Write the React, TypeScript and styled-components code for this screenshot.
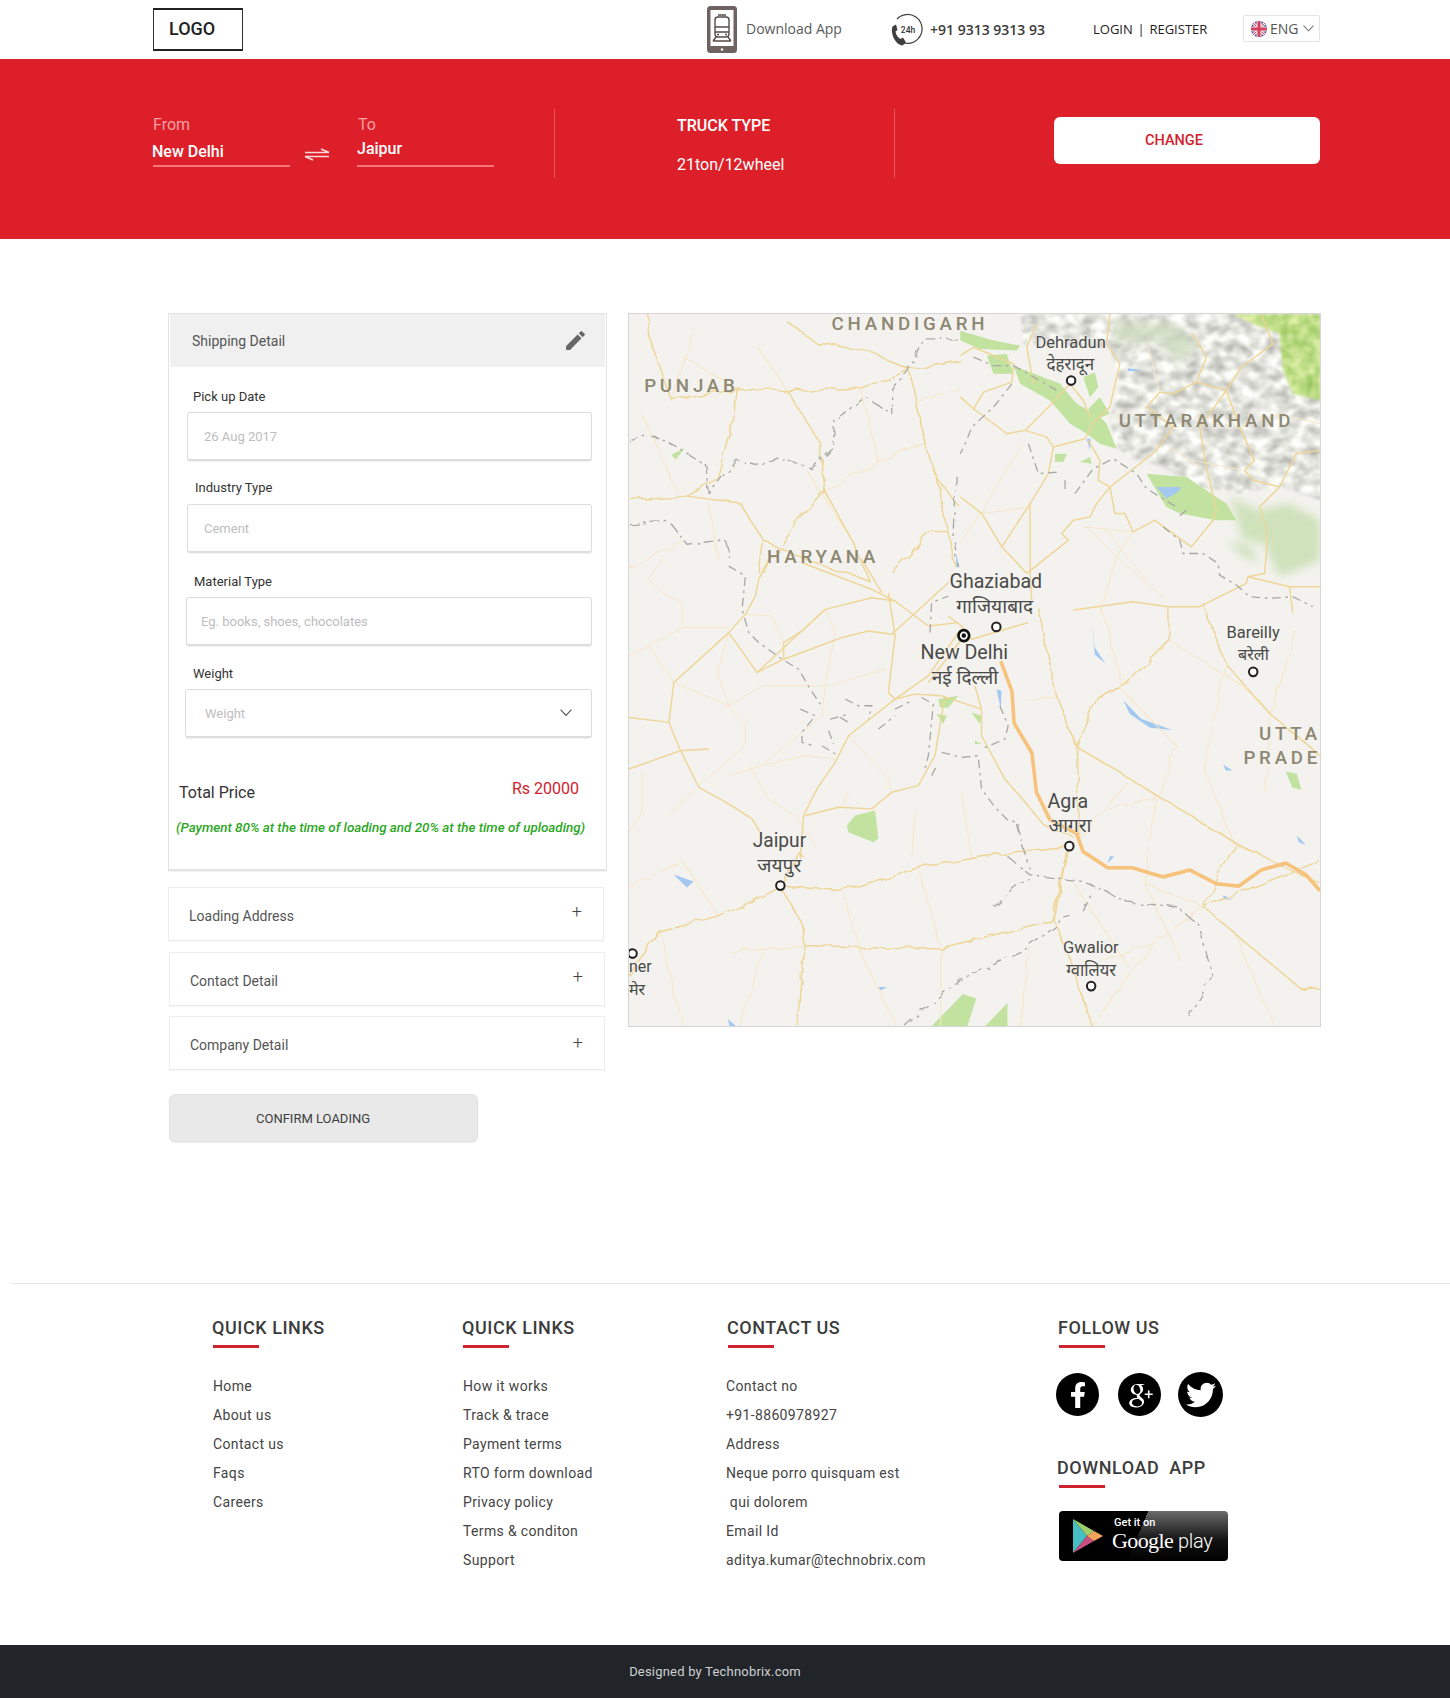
import React from "react";
import styled, { createGlobalStyle } from "styled-components";
import { FaFacebookF, FaTwitter } from "react-icons/fa";
import { MdEdit } from "react-icons/md";
import { TiSocialGooglePlus } from "react-icons/ti";

const Global = createGlobalStyle`
  html, body { margin: 0; padding: 0; background: #fff; }
  body { font-family: Roboto, "Liberation Sans", sans-serif; color: #333; }
  * { box-sizing: border-box; }
`;

const Page = styled.div`width: 1450px; height: 1698px; overflow: hidden; display: flex; flex-direction: column;`;

const Header = styled.header`
  height: 59px; padding-left: 153px; display: grid; align-items: center;
  grid-template-columns: 554px 183px 203px 150px 77px;
`;
const Logo = styled.div`
  width: 90px; height: 43px; border: 1px solid #333; border-top: 2px solid #222; border-bottom: 2px solid #222;
  display: flex; align-items: center; padding: 0 0 2px 15px; font-size: 18px; font-weight: 500; color: #222;
`;
const HeaderItem = styled.div`display: flex; align-items: center;`;
const DownloadText = styled.span`margin-left: 9px; font: 400 14px "Open Sans", sans-serif; color: #5a5a5a; position: relative; top: -1px;`;
const PhoneNumber = styled.span`margin-left: 7px; font: 600 14px "Open Sans", sans-serif; color: #3a3a3a;`;
const AuthLinks = styled.div`font: 400 13px "Open Sans", sans-serif; color: #222; white-space: pre; word-spacing: -1px; position: relative; top: -1px;`;
const LangBox = styled.div`
  height: 27px; width: 77px; border: 1px solid #e4e4e4; border-radius: 2px; display: flex; align-items: center;
  padding-left: 7px; gap: 3px; font: 400 14px "Open Sans", sans-serif; color: #555; position: relative; top: -1px;
`;
const LangChevron = styled.span`display: flex; margin-left: 1px;`;

const Band = styled.section`
  height: 180px; background: #dd1f2a; padding: 50px 0 0 153px; display: grid; grid-template-columns: 401px 341px 266px;
  align-items: start;
`;
const Route = styled.div`display: flex; align-items: flex-start;`;
const RouteField = styled.div`width: 137px; height: 58px; border-bottom: 2px solid #f4777d;`;
const RouteLabel = styled.div<{ $x?: number }>`
  font-size: 16px; line-height: 20px; color: #f7a0a5; margin-top: 6px; padding-left: ${p => p.$x ?? 0}px;
`;
const RouteValue = styled.div<{ $top: number; $x: number }>`
  font-size: 16px; font-weight: 500; line-height: 20px; color: #fff; margin-top: ${p => p.$top}px; margin-left: ${p => p.$x}px;
`;
const SwapIcon = styled.svg`width: 26px; height: 18px; margin: 35px 27px 0 14px; flex: none;`;
const Truck = styled.div`height: 69px; border-left: 1px solid #e9565e; border-right: 1px solid #e9565e; padding: 7px 0 0 122px; color: #fff;`;
const TruckTitle = styled.div`font-size: 16px; font-weight: 500; line-height: 20px;`;
const TruckValue = styled.div`font-size: 16px; line-height: 20px; margin-top: 19px;`;
const ChangeWrap = styled.div`padding-left: 159px; width: 425px;`;
const ChangeButton = styled.div`
  width: 266px; height: 47px; margin-top: 8px; background: #fff; border-radius: 6px; display: flex; align-items: center;
  padding-left: 91px; font-size: 14.5px; font-weight: 500; color: #d3202c;
`;

const Main = styled.main`height: 1044px; padding: 74px 0 0 168px; display: flex; gap: 21px; align-items: flex-start;`;
const LeftColumn = styled.div`width: 439px;`;
const Panel = styled.div`
  height: 558px; border: 1px solid #e3e3e3; border-bottom-width: 2px; padding: 0 1px; box-shadow: 0 1px 0 #f3f3f3;
`;
const PanelHead = styled.div`
  height: 53px; background: #f0f0f0; display: flex; align-items: center; justify-content: space-between;
  padding: 0 17px 0 22px; font-size: 14px; font-weight: 400; color: #555;
`;
const FieldLabel = styled.div<{ $top: number; $x: number }>`
  font-size: 13px; font-weight: 400; line-height: 16px; color: #333; margin-top: ${p => p.$top}px; margin-left: ${p => p.$x}px;
`;
const FieldBox = styled.div<{ $top: number; $x: number; $pad: number }>`
  height: 49px; margin: ${p => p.$top}px 13px 0 ${p => p.$x}px; border: 1px solid #ddd; border-bottom-width: 2px;
  border-radius: 3px; display: flex; align-items: center; justify-content: space-between; box-shadow: 0 1px 0 #f3f3f3;
  padding: 0 19px 0 ${p => p.$pad}px; font-size: 13px; color: #bdbdbd;
`;
const TotalRow = styled.div`
  margin: 43px 26px 0 9px; height: 24px; display: flex; justify-content: space-between; align-items: flex-start;
`;
const TotalLabel = styled.span`font-size: 16px; line-height: 20px; color: #333; margin-top: 2px;`;
const TotalValue = styled.span`font-size: 16px; line-height: 20px; color: #d3202c; margin-top: -2px;`;
const PaymentNote = styled.div`
  margin: 15px 0 0 6px; font-size: 13.4px; font-weight: 500; font-style: italic; line-height: 16px; color: #2aa71e; white-space: nowrap;
`;
const Accordion = styled.div<{ $top: number; $x?: number }>`
  width: 436px; height: 54px; margin-top: ${p => p.$top}px; margin-left: ${p => p.$x ?? 0}px; border: 1px solid #ececec;
  display: flex; align-items: center; justify-content: space-between; padding: 0 21px 0 20px; box-shadow: 0 1px 0 #f6f6f6;
  font-size: 14px; font-weight: 400; color: #555;
`;
const AccordionLabel = styled.span`position: relative; top: 2px;`;
const Plus = styled.span<{ $up?: number }>`font-size: 18px; font-weight: 300; color: #444; position: relative; top: ${p => -(p.$up ?? 3)}px;`;
const Confirm = styled.div`
  width: 309px; height: 48px; margin: 24px 0 0 1px; background: #e9e9e9; border: 1px solid #e2e2e2; border-radius: 6px; box-shadow: 0 1px 0 #f0f0f0;
  display: flex; align-items: center; padding-left: 86px; font-size: 13px; font-weight: 400; color: #3d3d3d;
`;
const MapFrame = styled.div`width: 693px; height: 714px; border: 1px solid #d5d5d5; flex: none; background: #f3f2ee;`;
const MapSvg = styled.svg`display: block; width: 691px; height: 712px;`;

const Footer = styled.footer`
  margin-left: 11px; height: 362px; border-top: 1px solid #e6e6e6; padding: 33px 0 0 201px;
  display: grid; grid-template-columns: 250px 265px 331px auto; align-items: start;
`;
const FootCol = styled.div``;
const FootHead = styled.div<{ $top?: number; $x?: number }>`
  font-size: 18px; font-weight: 500; line-height: 22px; letter-spacing: .55px; color: #3c3c3c; white-space: pre;
  margin-top: ${p => p.$top ?? 0}px; margin-left: ${p => p.$x ?? 0}px;
`;
const RedRule = styled.div`width: 46px; height: 3px; background: #cf222e; margin: 6px 0 0 1px;`;
const FootList = styled.ul<{ $x?: number }>`list-style: none; margin: 24px 0 0 ${p => p.$x ?? 1}px; padding: 0;`;
const FootItem = styled.li`font-size: 14px; line-height: 29px; letter-spacing: .35px; color: #444; white-space: pre;`;
const Socials = styled.div`display: flex; margin: 24px 0 0 -2px; align-items: center;`;
const Social = styled.div<{ $gap: number; $size: number }>`
  width: ${p => p.$size}px; height: ${p => p.$size}px; border-radius: 50%; background: #000; color: #fff; margin-left: ${p => p.$gap}px;
  display: flex; align-items: center; justify-content: center;
`;
const PlayBadge = styled.div`
  width: 169px; height: 50px; margin: 23px 0 0 1px; border-radius: 4px; overflow: hidden; color: #fff; display: flex;
  background: linear-gradient(113deg, #000 0 47%, transparent 47%), linear-gradient(180deg, #6a6a6a, #111 60%, #000);
`;
const PlayIcon = styled.svg`width: 32px; height: 36px; margin: 7px 0 0 13px; flex: none;`;
const PlayText = styled.div`margin-left: 8px; padding-top: 5px;`;
const PlaySmall = styled.div`font-size: 11px; font-weight: 500; line-height: 13px; margin-left: 2px;`;
const PlayBig = styled.div`font: 400 22px/24px "Liberation Serif", serif; letter-spacing: -.6px; white-space: nowrap;`;
const PlayWord = styled.span`font: 300 20px/24px Roboto, sans-serif; letter-spacing: -.3px;`;

const BottomBar = styled.div`
  height: 53px; background: #212529; color: #cfd0d1; font-size: 13px; display: flex; align-items: center; justify-content: center;
  padding-right: 20px; letter-spacing: .2px;
`;

/* Roads outside the two traced zones, in the map's own units */
const majorRoads = [
  "M630 130 L645 200 L665 290 L690 365 L715 480 L735 560", "M630 130 L744 110",
  "M630 130 L540 90 L420 70 L350 20", "M630 130 L520 170 L355 175 L240 170 L95 195 L50 80 L40 8",
  "M355 175 L430 290 L440 395 L500 500 L540 590", "M240 170 L235 240 L200 370 L130 405 L0 410",
  "M130 405 L250 420 L300 500 L290 570", "M540 590 L400 545 L300 500", "M440 395 L380 460 L300 570",
  "M715 480 L680 480 L590 570", "M690 365 L744 430",
  "M390 1190 L380 1180 L340 1255", "M340 1255 L200 1320 L70 1355 L20 1420 L0 1450",
  "M340 1255 L480 1265 L650 1215 L800 1190 L990 1170", "M340 1255 L390 1340 L395 1385 L380 1560",
  "M395 1385 L700 1390 L950 1330 L985 1170", "M985 1170 L955 1330 L1000 1440 L1040 1560",
  "M896 1080 L930 1120 L1000 1150", "M920 650 L960 840 L1005 950 L1010 1150",
  "M1005 950 L1190 1060 L1360 1160 L1552 1250", "M1215 650 L1215 720 L1105 825 L1050 840 L1005 950",
  "M1290 640 L1340 770 L1440 880 L1552 970", "M1290 1300 L1510 1480 L1552 1480", "M1290 1300 L1360 1165", "M1290 1300 L1552 1200",
];
const minorRoads = [
  "M30 230 L110 400", "M500 500 L400 350", "M355 175 L290 80", "M150 40 L95 195", "M440 395 L560 330 L665 290", "M645 200 L744 170",
  "M120 100 L240 170", "M0 560 L130 500", "M180 420 L200 540", "M520 170 L560 330", "M0 1260 L120 1200 L200 1320", "M70 1355 L120 1560", "M230 1400 L395 1385",
  "M480 1265 L520 1400 L600 1560", "M650 1215 L700 1390 L700 1560", "M300 1400 L250 1560", "M900 1390 L880 1560",
  "M960 840 L900 850", "M1060 640 L1110 825", "M1215 720 L1380 820 L1440 880", "M1105 825 L1230 950 L1190 1060",
  "M1340 770 L1290 1000 L1360 1160", "M1080 1090 L1180 1060 L1160 1250 L1290 1300", "M1010 1150 L1120 1030",
  "M1000 1440 L1180 1380 L1290 1300", "M1040 1560 L1180 1380", "M1360 1360 L1450 1560", "M1440 880 L1430 1050", "M1500 700 L1440 880",
  "M1000 1250 L1120 1430", "M1160 1250 L1240 1420",
];
const dashedRoads = [
  "M0 285 L50 270 L110 300 L175 340 L180 400 L240 325 L300 340 L330 320 L410 345 L460 300 L460 240 L530 190 L590 225 L590 170 L630 130 L660 60 L740 60",
  "M0 465 L90 460 L130 510 L215 500 L225 543", "M735 360 L730 500 L740 560",
  "M870 1120 L900 1220", "M850 1190 L900 1230 L1020 1245 L1120 1290 L1230 1300 L1280 1340 L1310 1450 L1260 1540",
  "M820 1300 L900 1240", "M1020 1310 L1040 1270", "M620 1560 L740 1460 L880 1400 L990 1320",
];
const route = "M835 765 L860 830 L865 900 L905 965 L915 1050 L945 1110 L1005 1140 L1020 1180 L1075 1215 L1130 1215 L1200 1235 L1260 1220 L1320 1250 L1370 1255 L1420 1220 L1475 1205 L1520 1230 L1552 1265";
const water = [
  "M1040 680 L1046 750 L1070 770 L1046 735 Z", "M1110 850 L1150 890 L1220 915 L1170 910 L1125 880 Z",
  "M100 1230 L145 1245 L130 1258 Z", "M1335 990 L1355 1003 L1340 1003 Z", "M1500 1145 L1520 1165 L1505 1160 Z", "M1335 1275 L1355 1285 L1335 1283 Z",
  "M1080 1190 L1090 1190 L1075 1205 Z", "M560 1475 L580 1475 L565 1482 Z", "M222 1545 L240 1560 L226 1560 Z", "M735 530 L742 560 L735 560 Z",
];
const greens = [
  "M680 1560 L750 1490 L780 1500 L760 1560 Z", "M800 1560 L850 1510 L850 1560 Z", "M95 315 L125 300 L105 325 Z", "M1475 1005 L1500 1010 L1510 1045 L1490 1040 Z",
];

/* North-east zone, traced at 3x from x 960, y 314 */
const zoneARoads = [
  "M0 250 L40 285 L70 235 L155 205 L160 150 L40 100 L0 125",
  "M40 285 L140 360 L195 350 L275 270 L330 210",
  "M195 350 L260 370 L280 400 L375 375 L405 320 L450 280 L470 190 L480 150 L440 90 L450 0",
  "M280 400 L265 480 L210 570 L210 780 L215 860", "M210 570 L125 700 L200 780 M0 550 L65 600 L125 700",
  "M200 780 L325 680 L305 660 L340 620 L390 610 L410 570 L450 520 L585 415 L640 340 L560 280 L600 235 L640 240 L710 205 L740 130 L700 60",
  "M385 380 L420 440 L415 500 L450 520 L465 600 L495 600 L520 655 L585 620 L695 700 L760 620 L770 590 L740 460 L720 340 L800 230 L710 205",
  "M800 230 L845 160 L940 90 L905 0", "M800 230 L840 340 L885 440 L855 470 L880 500 L960 520 L1010 420 L1083 410",
  "M960 520 L900 580 L925 660 L915 780 L865 790 L860 810 L720 880 L625 880 L520 865 L340 890",
  "M865 790 L990 820 L1000 900 M990 820 L1083 820", "M220 210 L200 100 L230 30 M330 210 L370 260 L390 310",
];
const zoneAMinor = [
  "M370 640 L520 655 L470 730 L420 900", "M470 730 L620 860", "M190 390 L100 530 L65 600 L210 580", "M630 400 L720 460", "M380 640 L470 730", "M430 640 L560 800",
  "M0 690 L60 600", "M840 340 L960 300 L1083 330", "M600 235 L560 80", "M850 470 L700 440",
];
const zoneADashed = [
  "M40 130 L100 155 L160 155 L300 235", "M155 210 L100 280 L35 340 L15 390 L0 420", "M205 390 L235 480 L300 475", "M315 500 L315 540",
  "M345 540 L400 465 L460 435 L530 480 L560 525 L650 580", "M680 590 L650 615",
  "M610 640 L660 680 L670 720 L730 720 L775 750 L780 785 L830 815 L870 850 L930 855 L1000 850 L1060 880",
];
const zoneAGreens = [
  "M80 125 L140 120 L160 180 L100 180 Z", "M160 155 L300 210 L350 270 L420 310 L440 330 L470 405 L420 390 L380 360 L330 330 L270 260 L180 210 Z",
  "M385 285 L420 250 L450 300 L400 320 Z", "M370 190 L405 175 L415 220 L390 250 Z", "M560 480 L680 490 L770 550 L800 570 L830 620 L770 620 L660 600 L620 580 Z",
  "M285 420 L320 420 L310 445 L285 445 Z", "M360 445 L390 430 L395 450 Z", "M0 50 L100 80 L180 95 L170 110 L60 105 L0 80 Z",
];
/* South-west zone, traced at 3x from x 628, y 560 */
const zoneBRoads = [
  "M300 220 L350 165 L380 110 L390 60 L420 0", "M300 220 L135 370 L120 490 L155 575 L210 685 L300 735 L370 780 L400 830",
  "M300 220 L385 340 L465 300 L640 235 L720 215 L790 225 L960 70", "M385 340 L590 150 L730 115 L800 125 L900 200 L990 190",
  "M465 300 L465 250 L520 215 L590 150", "M520 10 L730 90 L800 125", "M700 0 L760 100", "M780 100 L800 230 L780 400 L800 420 L860 405 L940 410 L1060 450",
  "M800 420 L660 530 L620 610 L565 690 L525 770 L515 900", "M800 420 L900 350 L990 220", "M950 410 L920 590 L870 680 L790 700 L730 750 L630 745 L530 770",
  "M0 475 L120 490", "M0 630 L155 575 L240 570", "M1040 380 L1060 450 L1060 530 L1130 660 L1200 740", "M960 170 L1000 200 L1030 240 L1200 190", "M1000 240 L900 370",
];
const zoneBMinor = [
  "M135 370 L300 440 L400 380 L600 380 L770 330", "M300 440 L350 500 L350 560 L210 680", "M590 150 L620 220 L590 380 L580 470 L400 620 L300 650",
  "M60 260 L160 205 L300 205", "M60 260 L135 370", "M100 100 L160 130 L160 205", "M350 165 L430 170 L465 250", "M400 620 L530 590 L620 600",
  "M660 530 L780 660 L790 700", "M500 770 L560 860", "M200 690 L120 770", "M40 640 L40 760 L0 820", "M860 760 L850 900", "M1000 700 L1030 900",
  "M300 220 L265 340 L300 440", "M360 620 L420 720 L500 770", "M660 700 L640 745", "M100 0 L60 60 L100 100", "M0 290 L60 260",
];
const zoneBDashed = [
  "M300 20 L350 50 L340 150 L360 220 L390 250 L460 300 L510 330 L545 390 L575 435", "M515 450 L560 470 L520 520 L520 550 L555 560", "M580 560 L620 585", "M600 515 L615 555",
  "M605 480 L660 465", "M650 420 L690 440 L730 440 L720 480", "M635 475 L660 490", "M750 510 L800 470", "M800 450 L850 425", "M880 415 L915 435 L900 590 L890 630", "M910 650 L925 620",
  "M940 580 L1000 595 L1050 590 L1060 690 L1100 745 L1140 785 L1170 790 L1170 820", "M905 220 L910 130 L960 110", "M1115 440 L1140 500 L1130 540 L1060 570",
];
const zoneBGreens = [
  "M655 800 L680 770 L740 755 L750 840 L735 850 L660 820 Z", "M930 420 L990 410 L960 445 L935 445 Z", "M1030 460 L1060 470 L1055 495 Z", "M925 465 L955 470 L945 495 Z", "M1040 545 L1060 555 L1040 555 Z",
];

const stateLabels: [string, number, number][] = [
  ["CHANDIGARH", 455, 43], ["PUNJAB", 34, 177], ["HARYANA", 310, 550], ["UTTARAKHAND", 1100, 254], ["UTTA", 1415, 936], ["PRADE", 1380, 990],
];
const cityLabels: [string, number, number, number][] = [
  ["Ghaziabad", 720, 605, 44], ["गाजियाबाद", 735, 660, 43], ["New Delhi", 655, 760, 44], ["नई दिल्ली", 680, 815, 43],
  ["Agra", 940, 1085, 44], ["आगरा", 942, 1138, 43], ["Jaipur", 278, 1170, 43], ["जयपुर", 288, 1224, 43],
  ["Dehradun", 913, 82, 37], ["देहरादून", 938, 130, 38], ["Bareilly", 1342, 715, 37], ["बरेली", 1368, 762, 36],
  ["Gwalior", 975, 1401, 37], ["ग्वालियर", 982, 1450, 37], ["ner", 0, 1443, 36], ["मेर", 0, 1492, 36],
];
const cityDots: [number, number][] = [[993, 153], [825, 690], [1402, 788], [989, 1168], [340, 1254], [1038, 1473], [8, 1402]];

const Lines = ({ items, color, width, dash }: { items: string[]; color: string; width: number; dash?: string }) => (
  <g fill="none" stroke={color} strokeWidth={width} strokeLinejoin="round" strokeDasharray={dash} filter="url(#softer)">
    {items.map((d, i) => <path key={i} d={d} />)}
  </g>
);

const RoadMap = () => (
  <MapSvg viewBox="0 8 1552 1552" preserveAspectRatio="none">
    <defs>
      <filter id="soft"><feGaussianBlur stdDeviation="12" /></filter>
      <filter id="softer"><feGaussianBlur stdDeviation="1" /></filter>
      <filter id="wiggle" x="-5%" y="-5%" width="110%" height="110%">
        <feTurbulence type="fractalNoise" baseFrequency=".025" numOctaves="2" seed="4" result="n" />
        <feDisplacementMap in="SourceGraphic" in2="n" scale="18" />
      </filter>
      <filter id="rock" colorInterpolationFilters="sRGB" x="-5%" y="-5%" width="110%" height="110%">
        <feTurbulence type="fractalNoise" baseFrequency=".025 .035" numOctaves="4" seed="7" />
        <feColorMatrix values=".55 0 0 0 .62  .55 0 0 0 .62  .55 0 0 0 .6  0 0 0 0 1" />
        <feComposite operator="in" in2="SourceGraphic" />
        <feGaussianBlur stdDeviation="3" />
      </filter>
      <filter id="rockGreen" colorInterpolationFilters="sRGB" x="-5%" y="-5%" width="110%" height="110%">
        <feTurbulence type="fractalNoise" baseFrequency=".03" numOctaves="3" seed="11" />
        <feColorMatrix values=".5 0 0 0 .5  .3 0 0 0 .72  .5 0 0 0 .28  0 0 0 0 1" />
        <feComposite operator="in" in2="SourceGraphic" />
        <feGaussianBlur stdDeviation="3" />
      </filter>
    </defs>
    <rect x="0" y="8" width="1552" height="1552" fill="#f3f2ee" />
    <g transform="translate(744 8) scale(.747 .725)">
      <path d="M180 0 L1083 0 L1083 560 L960 520 L840 540 L720 520 L600 460 L510 430 L470 400 L450 320 L480 200 L450 100 L190 90 Z" filter="url(#rock)" />
      <path d="M820 0 L1083 0 L1083 260 L1000 240 L970 170 L960 60 L880 30 Z" filter="url(#rockGreen)" />
      <path d="M810 550 L900 590 L990 570 L1083 620 L1083 740 L960 790 L930 730 L915 690 L850 680 Z M800 680 L870 700 L900 745 L850 730 Z" fill="#cfe2bc" filter="url(#soft)" />
      <path d="M460 20 L640 30 L720 100 L650 150 L600 80 L470 90 Z" fill="#cddbbf" filter="url(#soft)" opacity=".8" />
      <g fill="#c2e2a0" filter="url(#softer)">{zoneAGreens.map((d, i) => <path key={i} d={d} />)}</g>
      <path d="M590 520 L665 520 L655 535 L620 555 Z M505 163 L550 170 L505 172 Z M380 375 L392 375 L390 410 Z" fill="#a3c8f2" />
      <Lines items={zoneAMinor} color="#f6e7c8" width={3} />
      <Lines items={zoneARoads} color="#efd596" width={4.3} />
      <Lines items={zoneADashed} color="#a9a9a5" width={4} dash="26 14 8 14" />
    </g>
    <g transform="translate(0 543) scale(.747 .725)">
      <g fill="#c2e2a0" filter="url(#softer)">{zoneBGreens.map((d, i) => <path key={i} d={d} />)}</g>
      <path d="M1105 390 L1120 395 L1118 450 Z" fill="#a3c8f2" />
      <Lines items={zoneBMinor} color="#f6e7c8" width={3} />
      <Lines items={zoneBRoads} color="#efd596" width={4.3} />
      <Lines items={zoneBDashed} color="#a9a9a5" width={4} dash="26 14 8 14" />
    </g>
    <g fill="#c2e2a0" filter="url(#softer)">{greens.map((d, i) => <path key={i} d={d} />)}</g>
    <g fill="#a3c8f2" filter="url(#softer)">{water.map((d, i) => <path key={i} d={d} />)}</g>
    <g filter="url(#wiggle)">
      <Lines items={minorRoads} color="#f6e7c8" width={2.4} />
      <Lines items={majorRoads} color="#efd596" width={3.2} />
      <Lines items={dashedRoads} color="#a9a9a5" width={3} dash="22 10 6 10" />
    </g>
    <path d={route} fill="none" stroke="#f6c27c" strokeWidth="8" strokeLinejoin="round" filter="url(#softer)" />
    <g fontFamily="Roboto, sans-serif" fontWeight="500" fontSize="42" letterSpacing="8.5" fill="#8e8873">
      {stateLabels.map(([t, x, y]) => <text key={t} x={x} y={y}>{t}</text>)}
    </g>
    <g fontFamily="Roboto, 'Noto Sans', sans-serif" fill="#4a4a4a">
      {cityLabels.map(([t, x, y, s]) => <text key={t} x={x} y={y} fontSize={s} stroke="#f3f2ee" strokeWidth="2.5" paintOrder="stroke">{t}</text>)}
    </g>
    <g fill="#fff" stroke="#222" strokeWidth="4.5">
      {cityDots.map(([x, y]) => <circle key={x} cx={x} cy={y} r="9.5" />)}
    </g>
    <circle cx="752" cy="709" r="12" fill="#fff" stroke="#111" strokeWidth="6" />
    <circle cx="752" cy="709" r="5" fill="#111" />
  </MapSvg>
);

const TrainPhone = () => (
  <svg width="30" height="47" viewBox="0 0 30 47">
    <rect x="0" y="0" width="30" height="47" rx="3.5" fill="#6e6360" />
    <rect x="3.5" y="4" width="23" height="36" fill="#fff" />
    <circle cx="15" cy="43.5" r="1.2" fill="#fff" />
    <g fill="none" stroke="#544b49" strokeWidth="1.4">
      <rect x="8" y="11" width="14" height="20" rx="3" />
      <path d="M11 9h8M8 21h14M8 26h14M9 31l-3 4M21 31l3 4M6 35h18" />
    </g>
    <circle cx="11" cy="28.5" r="1" fill="#544b49" />
    <circle cx="19" cy="28.5" r="1" fill="#544b49" />
  </svg>
);
const Clock24 = () => (
  <svg width="33" height="35" viewBox="0 0 33 35">
    <path d="M7 7a14.5 14.5 0 1 1 7 24" fill="none" stroke="#3f3f3f" strokeWidth="1.2" />
    <path d="M2.5 14.5 L6 12.5 L7.5 18 L5.5 19.5 C6 23 8 25.5 10.5 27 L13 25.5 L16 30.5 L12.5 33.5 C6 33 0 22 2.5 14.5 Z" fill="#3f3f3f" />
    <text x="18" y="20.5" textAnchor="middle" fontFamily="Roboto, sans-serif" fontSize="8.5" fontWeight="500" fill="#333">24h</text>
  </svg>
);
const Flag = () => (
  <svg width="16" height="16" viewBox="0 0 16 16">
    <defs><clipPath id="flagclip"><circle cx="8" cy="8" r="8" /></clipPath></defs>
    <g clipPath="url(#flagclip)">
      <rect width="16" height="16" fill="#4b4f8e" />
      <path d="M0 0L16 16M16 0L0 16" stroke="#f1e5ea" strokeWidth="3" />
      <path d="M0 0L16 16M16 0L0 16" stroke="#d4435f" strokeWidth="1" />
      <path d="M8 0V16M0 8H16" stroke="#f1e5ea" strokeWidth="5" />
      <path d="M8 0V16M0 8H16" stroke="#d4435f" strokeWidth="3" />
    </g>
  </svg>
);
const Chevron = ({ size = 12, color = "#555" }: { size?: number; color?: string }) => (
  <svg width={size} height={size * 0.62} viewBox="0 0 12 7.4">
    <path d="M.6.6 6 6.4 11.4.6" fill="none" stroke={color} strokeWidth="1.1" />
  </svg>
);

const col1 = ["Home", "About us", "Contact us", "Faqs", "Careers"];
const col2 = ["How it works", "Track & trace", "Payment terms", "RTO form download", "Privacy policy", "Terms & conditon", "Support"];
const col3 = ["Contact no", "+91-8860978927", "Address", "Neque porro quisquam est", " qui dolorem", "Email Id", "aditya.kumar@technobrix.com"];

export default function App() {
  return (
    <Page>
      <Global />
      <Header>
        <Logo>LOGO</Logo>
        <HeaderItem><TrainPhone /><DownloadText>Download App</DownloadText></HeaderItem>
        <HeaderItem><Clock24 /><PhoneNumber>+91 9313 9313 93</PhoneNumber></HeaderItem>
        <AuthLinks>LOGIN  |  REGISTER</AuthLinks>
        <LangBox><Flag />ENG<LangChevron><Chevron size={11} color="#777" /></LangChevron></LangBox>
      </Header>
      <Band>
        <Route>
          <RouteField>
            <RouteLabel>From</RouteLabel>
            <RouteValue $top={7} $x={-1}>New Delhi</RouteValue>
          </RouteField>
          <SwapIcon viewBox="0 0 26 18">
            <path d="M1 8.5H25L17 5M25 12.5H1L9 16" fill="none" stroke="#fbd7d9" strokeWidth="1.5" />
          </SwapIcon>
          <RouteField>
            <RouteLabel $x={1}>To</RouteLabel>
            <RouteValue $top={4} $x={0}>Jaipur</RouteValue>
          </RouteField>
        </Route>
        <Truck>
          <TruckTitle>TRUCK TYPE</TruckTitle>
          <TruckValue>21ton/12wheel</TruckValue>
        </Truck>
        <ChangeWrap><ChangeButton>CHANGE</ChangeButton></ChangeWrap>
      </Band>
      <Main>
        <LeftColumn>
          <Panel>
            <PanelHead>Shipping Detail<MdEdit size={25} color="#666" /></PanelHead>
            <FieldLabel $top={22} $x={23}>Pick up Date</FieldLabel>
            <FieldBox $top={7} $x={17} $pad={16}>26 Aug 2017</FieldBox>
            <FieldLabel $top={19} $x={25}>Industry Type</FieldLabel>
            <FieldBox $top={8} $x={17} $pad={16}>Cement</FieldBox>
            <FieldLabel $top={21} $x={24}>Material Type</FieldLabel>
            <FieldBox $top={7} $x={16} $pad={14}>Eg. books, shoes, chocolates</FieldBox>
            <FieldLabel $top={20} $x={23}>Weight</FieldLabel>
            <FieldBox $top={7} $x={15} $pad={19}>Weight<Chevron /></FieldBox>
            <TotalRow>
              <TotalLabel>Total Price</TotalLabel>
              <TotalValue>Rs 20000</TotalValue>
            </TotalRow>
            <PaymentNote>(Payment 80% at the time of loading and 20% at the time of uploading)</PaymentNote>
          </Panel>
          <Accordion $top={16}><AccordionLabel>Loading Address</AccordionLabel><Plus>+</Plus></Accordion>
          <Accordion $top={11} $x={1}><AccordionLabel>Contact Detail</AccordionLabel><Plus>+</Plus></Accordion>
          <Accordion $top={10} $x={1}><AccordionLabel>Company Detail</AccordionLabel><Plus $up={1}>+</Plus></Accordion>
          <Confirm>CONFIRM LOADING</Confirm>
        </LeftColumn>
        <MapFrame><RoadMap /></MapFrame>
      </Main>
      <Footer>
        <FootCol>
          <FootHead>QUICK LINKS</FootHead><RedRule />
          <FootList>{col1.map(t => <FootItem key={t}>{t}</FootItem>)}</FootList>
        </FootCol>
        <FootCol>
          <FootHead>QUICK LINKS</FootHead><RedRule />
          <FootList>{col2.map(t => <FootItem key={t}>{t}</FootItem>)}</FootList>
        </FootCol>
        <FootCol>
          <FootHead>CONTACT US</FootHead><RedRule />
          <FootList $x={-1}>{col3.map(t => <FootItem key={t}>{t}</FootItem>)}</FootList>
        </FootCol>
        <FootCol>
          <FootHead>FOLLOW US</FootHead><RedRule />
          <Socials>
            <Social $gap={0} $size={43}><FaFacebookF size={26} /></Social>
            <Social $gap={19} $size={43}><TiSocialGooglePlus size={38} /></Social>
            <Social $gap={17} $size={45}><FaTwitter size={30} /></Social>
          </Socials>
          <FootHead $top={40} $x={-1}>{"DOWNLOAD  APP"}</FootHead><RedRule />
          <PlayBadge>
            <PlayIcon viewBox="0 0 32 36">
              <path d="M1 1 L15 18 L1 35 Z" fill="#45bfc4" />
              <path d="M1 1 L22 13 L15 18 Z" fill="#9ccf6a" />
              <path d="M1 35 L22 23 L15 18 Z" fill="#c94f80" />
              <path d="M22 13 L31 18 L22 23 L15 18 Z" fill="#f2a45c" />
            </PlayIcon>
            <PlayText>
              <PlaySmall>Get it on</PlaySmall>
              <PlayBig>Google <PlayWord>play</PlayWord></PlayBig>
            </PlayText>
          </PlayBadge>
        </FootCol>
      </Footer>
      <BottomBar>Designed by Technobrix.com</BottomBar>
    </Page>
  );
}
